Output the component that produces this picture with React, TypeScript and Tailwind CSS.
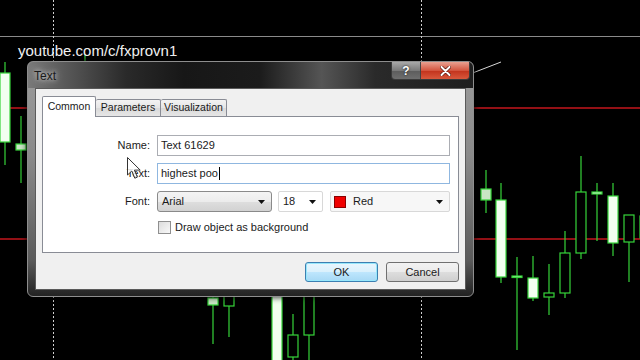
import React from "react";

type Candle = {
  x: number;
  hi: number;
  lo: number;
  top: number;
  bot: number;
  kind: "fill" | "hollow" | "dim";
};

const candles: Candle[] = [
  { x: 5, hi: 62, lo: 165, top: 73, bot: 142, kind: "fill" },
  { x: 21, hi: 116, lo: 183, top: 144, bot: 150, kind: "dim" },
  { x: 486, hi: 170, lo: 213, top: 189, bot: 200, kind: "dim" },
  { x: 501, hi: 183, lo: 283, top: 200, bot: 277, kind: "fill" },
  { x: 517, hi: 257, lo: 350, top: 276, bot: 277, kind: "fill" },
  { x: 533, hi: 256, lo: 301, top: 278, bot: 298, kind: "fill" },
  { x: 549, hi: 264, lo: 315, top: 293, bot: 297, kind: "hollow" },
  { x: 565, hi: 231, lo: 298, top: 253, bot: 293, kind: "hollow" },
  { x: 581, hi: 156, lo: 259, top: 192, bot: 253, kind: "hollow" },
  { x: 597, hi: 183, lo: 241, top: 192, bot: 194, kind: "fill" },
  { x: 613, hi: 183, lo: 256, top: 196, bot: 243, kind: "fill" },
  { x: 629, hi: 215, lo: 282, top: 215, bot: 242, kind: "hollow" },
  { x: 645, hi: 200, lo: 260, top: 216, bot: 238, kind: "hollow" },
  { x: 213, hi: 290, lo: 344, top: 298, bot: 305, kind: "dim" },
  { x: 229, hi: 290, lo: 337, top: 290, bot: 306, kind: "hollow" },
  { x: 277, hi: 290, lo: 370, top: 290, bot: 370, kind: "fill" },
  { x: 293, hi: 314, lo: 370, top: 335, bot: 357, kind: "hollow" },
  { x: 309, hi: 290, lo: 370, top: 290, bot: 335, kind: "hollow" },
];

const bodyFill = { fill: "#f2fff0", hollow: "#000000", dim: "#c9e6c4" };

function Chart() {
  return (
    <svg className="absolute inset-0" width="640" height="360" viewBox="0 0 640 360">
      <line x1="0" y1="36.5" x2="640" y2="36.5" stroke="#8a8a8a" strokeWidth="1" />
      <line x1="53.5" y1="0" x2="53.5" y2="360" stroke="#d0d0d0" strokeDasharray="2 2" />
      <line x1="421.5" y1="0" x2="421.5" y2="360" stroke="#d0d0d0" strokeDasharray="2 2" />
      <line x1="0" y1="108" x2="640" y2="108" stroke="#c4161c" strokeWidth="1.4" />
      <line x1="0" y1="239" x2="640" y2="239" stroke="#c4161c" strokeWidth="1.4" />
      <line x1="470" y1="74" x2="501" y2="62" stroke="#d8d8d8" strokeWidth="1" />
      <line x1="85" y1="54" x2="85" y2="62" stroke="#36d43a" strokeWidth="1.2" />
      {candles.map((c, i) => (
        <g key={i}>
          <line x1={c.x} y1={c.hi} x2={c.x} y2={c.lo} stroke="#36d43a" strokeWidth="1.2" />
          <rect
            x={c.x - 5}
            y={c.top}
            width="10"
            height={Math.max(c.bot - c.top, 1.5)}
            fill={bodyFill[c.kind]}
            stroke="#36d43a"
            strokeWidth="1.2"
          />
        </g>
      ))}
    </svg>
  );
}

function Arrow() {
  return (
    <svg width="7" height="4" viewBox="0 0 7 4" className="shrink-0">
      <path d="M0 0h7L3.5 4z" fill="#111" />
    </svg>
  );
}

function Field({ label, children }: { label: string; children: React.ReactNode }) {
  return (
    <div className="flex h-[21px] items-center gap-[7px]">
      <span className="w-[107px] text-right">{label}</span>
      {children}
    </div>
  );
}

export default function App() {
  return (
    <div className="relative h-[360px] w-[640px] overflow-hidden bg-black font-['Liberation_Sans',Arial,sans-serif] text-[11px] text-[#1a1a1a]">
      <Chart />

      <div className="absolute left-[18px] top-[40px] text-[15px] text-[#f2f2f2]">youtube.com/c/fxprovn1</div>

      <div className="absolute left-[27px] top-[61px] flex h-[236px] w-[447px] flex-col rounded-[6px] border border-[#8e8e8e] bg-[linear-gradient(180deg,#9c9c9c_0%,#8a8a8a_40%,#5a5a5a_85%,#222_100%)] shadow-[0_0_6px_rgba(0,0,0,0.9)]">
        <div className="flex h-[26px] rounded-t-[5px] bg-[linear-gradient(90deg,#7a7a7a_0%,#5a5a5a_8%,#2a2a2a_22%,#171717_35%,#1b1b1b_52%,#555_66%,#2a2a2a_78%,#1e1e1e_100%)]">
          <span className="ml-[6px] mt-[5px] text-[12px] text-[#1a1a1a] [text-shadow:0_0_4px_rgba(230,230,230,0.9),0_0_8px_rgba(200,200,200,0.8)]">
            Text
          </span>
          <div className="ml-auto mr-[3px] flex h-[18px] overflow-hidden rounded-b-[4px] border border-t-0 border-[#3a3a3a]">
            <div className="flex w-[29px] items-center justify-center border-r border-[#444] bg-[linear-gradient(180deg,#a8a8a8,#7a7a7a_50%,#5c5c5c_51%,#6e6e6e)] text-[12px] font-bold text-white [text-shadow:0_0_2px_#000]">
              ?
            </div>
            <div className="flex w-[48px] items-center justify-center bg-[linear-gradient(180deg,#e9a090,#d3553f_50%,#c2321c_51%,#d8583c)]">
              <svg width="11" height="10" viewBox="0 0 11 10">
                <path d="M1.5 1l8 8M9.5 1l-8 8" stroke="#5a1408" strokeWidth="3.4" strokeLinecap="round" />
                <path d="M1.5 1l8 8M9.5 1l-8 8" stroke="#fff" strokeWidth="2" strokeLinecap="round" />
              </svg>
            </div>
          </div>
        </div>

        <div className="mx-[7px] mb-[6px] flex flex-1 flex-col border border-[#5a5a5a] bg-[#f0f0f0] px-[6px] pb-[7px] pt-[7px]">
          <div className="relative z-10 flex h-[20px] items-end text-[10.5px]">
            <div className="mb-[-1px] flex h-[21px] w-[54px] items-center justify-center rounded-t-[2px] border border-b-0 border-[#898c95] bg-white">
              Common
            </div>
            <div className="flex h-[17px] w-[65px] items-center justify-center rounded-t-[2px] border border-b-0 border-l-0 border-[#898c95] bg-[linear-gradient(180deg,#f3f3f3,#e5e5e5_50%,#d9d9d9_51%,#e6e6e6)]">
              Parameters
            </div>
            <div className="flex h-[17px] w-[66px] items-center justify-center rounded-t-[2px] border border-b-0 border-l-0 border-[#898c95] bg-[linear-gradient(180deg,#f3f3f3,#e5e5e5_50%,#d9d9d9_51%,#e6e6e6)]">
              Visualization
            </div>
          </div>

          <div className="flex h-[137px] flex-col gap-[7px] border border-[#898c95] bg-white pt-[18px]">
            <Field label="Name:">
              <div className="flex h-[21px] w-[293px] items-center border border-[#abadb3] bg-white pl-[3px]">Text 61629</div>
            </Field>
            <Field label="Text:">
              <div className="flex h-[21px] w-[293px] items-center border border-[#8fb7e0] bg-white pl-[3px]">
                highest poo
                <span className="ml-px inline-block h-[13px] w-px bg-black" />
              </div>
            </Field>
            <Field label="Font:">
              <div className="flex h-[21px] w-[115px] items-center justify-between rounded-[3px] border border-[#8a8a8a] bg-[linear-gradient(180deg,#f4f4f4,#ececec_50%,#dedede_51%,#d2d2d2)] pl-[4px] pr-[6px]">
                <span>Arial</span>
                <Arrow />
              </div>
              <div className="ml-[-1px] flex h-[21px] w-[45px] items-center justify-between rounded-[2px] border border-[#d8d8d8] bg-white pl-[4px] pr-[6px]">
                <span>18</span>
                <Arrow />
              </div>
              <div className="flex h-[21px] w-[120px] items-center rounded-[2px] border border-[#d8d8d8] bg-[#f7f7f7] pl-[3px] pr-[6px]">
                <span className="h-[12px] w-[12px] border border-[#8a0000] bg-[#f00000]" />
                <span className="ml-[7px]">Red</span>
                <span className="ml-auto">
                  <Arrow />
                </span>
              </div>
            </Field>
            <div className="mt-[2px] flex h-[13px] items-center gap-[4px] pl-[115px]">
              <span className="h-[13px] w-[13px] border border-[#8f8f8f] bg-[linear-gradient(135deg,#dcdcdc,#f8f8f8)]" />
              <span>Draw object as background</span>
            </div>
          </div>

          <div className="mt-[9px] flex justify-end gap-[8px]">
            <div className="flex h-[20px] w-[73px] items-center justify-center rounded-[3px] border border-[#3c7fb1] bg-[linear-gradient(180deg,#eaf6fd,#d9f0fc_50%,#bee6fd_51%,#a7d9f5)] shadow-[inset_0_0_0_1px_#97e7fb]">
              OK
            </div>
            <div className="flex h-[20px] w-[73px] items-center justify-center rounded-[3px] border border-[#707070] bg-[linear-gradient(180deg,#f2f2f2,#ebebeb_50%,#dddddd_51%,#cfcfcf)]">
              Cancel
            </div>
          </div>
        </div>
      </div>

      <svg className="absolute left-[127px] top-[157px]" width="14" height="23" viewBox="0 0 14 23">
        <path d="M0.5 0.5v17.5l4.3-4 3 7.2 2.6-1.1-3-7h5.8z" fill="rgba(255,255,255,0.85)" stroke="#333" strokeWidth="1" />
      </svg>
    </div>
  );
}
